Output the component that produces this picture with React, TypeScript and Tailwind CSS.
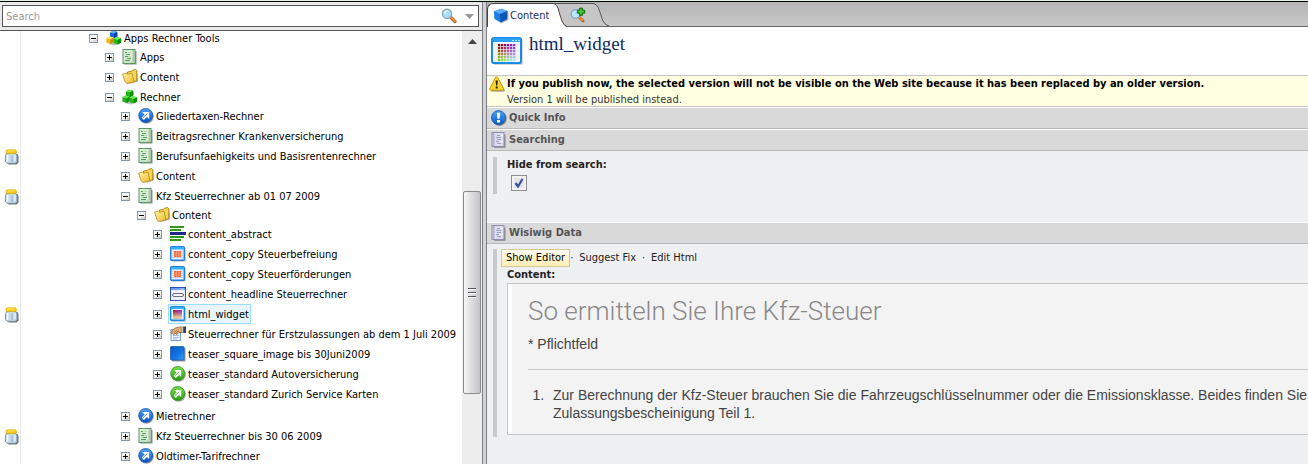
import { useId, type ReactNode } from "react";

type IconKind =
  | "cubes"
  | "greenCubes"
  | "page"
  | "folder"
  | "blueArrow"
  | "greenArrow"
  | "abstract"
  | "copy"
  | "headline"
  | "widget"
  | "hand"
  | "square";

interface TreeNode {
  label: string;
  icon: IconKind;
  locked?: boolean;
  selected?: boolean;
  children?: TreeNode[];
}

const tree: TreeNode[] = [
  {
    label: "Apps Rechner Tools",
    icon: "cubes",
    children: [
      { label: "Apps", icon: "page" },
      { label: "Content", icon: "folder" },
      {
        label: "Rechner",
        icon: "greenCubes",
        children: [
          { label: "Gliedertaxen-Rechner", icon: "blueArrow" },
          { label: "Beitragsrechner Krankenversicherung", icon: "page" },
          { label: "Berufsunfaehigkeits und Basisrentenrechner", icon: "page", locked: true },
          { label: "Content", icon: "folder" },
          {
            label: "Kfz Steuerrechner ab 01 07 2009",
            icon: "page",
            locked: true,
            children: [
              {
                label: "Content",
                icon: "folder",
                children: [
                  { label: "content_abstract", icon: "abstract" },
                  { label: "content_copy Steuerbefreiung", icon: "copy" },
                  { label: "content_copy Steuerförderungen", icon: "copy" },
                  { label: "content_headline Steuerrechner", icon: "headline" },
                  { label: "html_widget", icon: "widget", locked: true, selected: true },
                  { label: "Steuerrechner für Erstzulassungen ab dem 1 Juli 2009", icon: "hand" },
                  { label: "teaser_square_image bis 30Juni2009", icon: "square" },
                  { label: "teaser_standard Autoversicherung", icon: "greenArrow" },
                  { label: "teaser_standard Zurich Service Karten", icon: "greenArrow" },
                ],
              },
            ],
          },
          { label: "Mietrechner", icon: "blueArrow" },
          { label: "Kfz Steuerrechner bis 30 06 2009", icon: "page", locked: true },
          { label: "Oldtimer-Tarifrechner", icon: "blueArrow" },
        ],
      },
    ],
  },
];

const indents = ["pl-[68px]", "pl-[84px]", "pl-[100px]", "pl-[116px]", "pl-[132px]"];

function Svg({ children, size = "size-4" }: { children: ReactNode; size?: string }) {
  return (
    <svg viewBox="0 0 16 16" className={`${size} shrink-0`} aria-hidden="true">
      {children}
    </svg>
  );
}

function Cube({ x, y, top, left, right }: { x: number; y: number; top: string; left: string; right: string }) {
  return (
    <g transform={`translate(${x} ${y})`}>
      <path d="M0.4 2.2 3.4 0.5 7.6 1.6 7.8 6 4.4 8 .4 6.6Z" fill={left} />
      <path d="M0.4 2.2 3.4 0.5 7.6 1.6 4.4 3.4Z" fill={top} />
      <path d="M4.4 3.4 7.6 1.6 7.8 6 4.4 8Z" fill={right} />
    </g>
  );
}

function NodeIcon({ kind }: { kind: IconKind }) {
  const id = useId();
  switch (kind) {
    case "cubes":
    case "greenCubes": {
      const green = kind === "greenCubes";
      return (
        <Svg>
          <path d="M2 14 9 15.4 15.6 12.6V8L9 12Z" fill="#000" opacity=".25" />
          {green ? (
            <Cube x={3.6} y={0.2} top="#5fe84a" left="#1fb414" right="#0d8a08" />
          ) : (
            <Cube x={3.6} y={0.2} top="#6db4ff" left="#1c62e0" right="#0a3fae" />
          )}
          {green ? (
            <Cube x={0} y={6} top="#5fe84a" left="#1fb414" right="#0d8a08" />
          ) : (
            <Cube x={0} y={6} top="#ffe97a" left="#f2b610" right="#c58a08" />
          )}
          <Cube x={7.3} y={6.6} top="#6cf055" left="#24bb18" right="#0d8a08" />
        </Svg>
      );
    }
    case "page":
      return (
        <Svg>
          <path d="M2 2H14.500V15.500H2Z" fill="#6b786d" opacity=".8" />
          <rect x="1" y=".5" width="12" height="14" fill="#dcedda" stroke="#5c9462" />
          <path d="M10.500 1H12.500V14H10.500Z" fill="#a9cba8" />
          <path d="M3 3.500H5M4 5.500H8M3 7.500H6M5 9.500H9M3 11.500H8" stroke="#559a59" />
          <path d="M6 3.500H9M6 7.500H9M3 9.500H5M2 13H12" stroke="#b4d6b2" />
        </Svg>
      );
    case "folder":
      return (
        <Svg>
          <defs>
            <linearGradient id={id} x1="0" y1="0" x2="1" y2="1">
              <stop offset="0" stopColor="#fff6a8" />
              <stop offset="1" stopColor="#efb92c" />
            </linearGradient>
          </defs>
          <path d="M5 15 15.800 12.500V3.500L13 14Z" fill="#555" opacity=".5" />
          <path d="M5.500 3 9.500 2.400 10.500 1.200 13.800.6 14.800 1.800V11.800L6 13.800Z" fill="#f6d650" stroke="#a67c12" strokeWidth=".9" />
          <path d="M.6 5.200 4.200 4 5.800 5.200 10 4.200 12 12.800 4.800 14.500 3 12.500Z" fill={`url(#${id})`} stroke="#b5881a" strokeWidth=".8" />
        </Svg>
      );
    case "blueArrow":
    case "greenArrow": {
      const blue = kind === "blueArrow";
      return (
        <Svg>
          <defs>
            <linearGradient id={id} x1="0" y1="0" x2="0" y2="1">
              <stop offset="0" stopColor={blue ? "#4ea2f4" : "#7be04a"} />
              <stop offset="1" stopColor={blue ? "#0a52bd" : "#279a12"} />
            </linearGradient>
          </defs>
          <circle cx="8.600" cy="8.600" r="7.200" fill="#222" opacity=".4" />
          <circle cx="7.700" cy="7.500" r="7" fill={`url(#${id})`} stroke={blue ? "#1656b0" : "#2c9418"} strokeWidth=".8" />
          <path d="M4.200 4H11.200V11L9 8.900 5.800 12 3.600 9.800 6.600 6.500Z" fill="#fff" />
          <path d="M4.800 9.900 9.300 5.600" stroke={blue ? "#1560c8" : "#3cab22"} strokeWidth=".8" />
        </Svg>
      );
    }
    case "abstract":
      return (
        <Svg>
          <path d="M0 0H14V2H0ZM0 3H11V5H0ZM0 10H14V12H0ZM0 13H11V15H0Z" fill="#2c9a14" />
          <path d="M0 6H16V9H0Z" fill="#24248c" />
        </Svg>
      );
    case "copy":
      return (
        <Svg>
          <path d="M2 2H15.500V15.500H2Z" fill="#555" opacity=".5" />
          <rect x=".7" y=".7" width="13.600" height="13.600" rx="1" fill="#e9ecfa" stroke="#1b7fe0" strokeWidth="1.400" />
          <path d="M1 1H14V3.500H1Z" fill="#37b0f8" />
          <path d="M2.500 5.500H13M2.500 7.500H13M2.500 9.500H13M2.500 11.500H13" stroke="#aab0d8" strokeDasharray="1 1" />
          <rect x="4" y="5" width="7" height="6" fill="#f06a3c" />
          <path d="M6.500 5V11M8.800 5V11M4 7H11M4 9H11" stroke="#ffb08c" strokeWidth=".5" />
        </Svg>
      );
    case "headline":
      return (
        <Svg>
          <rect x=".5" y="1.500" width="15" height="13" fill="#eef1fb" stroke="#2f50b4" />
          <path d="M1 2H15V4H1Z" fill="#6c9df0" />
          <path d="M10.500 3H14" stroke="#fff" strokeDasharray="1 1" />
          <rect x="2.500" y="7.500" width="11" height="3" rx="1.500" fill="#f4f4f4" stroke="#6d6d75" />
        </Svg>
      );
    case "widget":
      return (
        <Svg>
          <defs>
            <linearGradient id={id} x1="0" y1="0" x2="1" y2="0">
              <stop offset="0" stopColor="#8e1030" />
              <stop offset="1" stopColor="#9a28e8" />
            </linearGradient>
            <linearGradient id={`${id}b`} x1="0" y1="0" x2="0" y2="1">
              <stop offset="0" stopColor="#e8d870" stopOpacity="0" />
              <stop offset="1" stopColor="#f0e89a" />
            </linearGradient>
          </defs>
          <path d="M2 2H15.500V15.500H2Z" fill="#555" opacity=".5" />
          <rect x=".7" y=".7" width="13.600" height="13.600" rx="1" fill="#eef6ff" stroke="#1b86e4" strokeWidth="1.400" />
          <path d="M1 1H14V3H1Z" fill="#37b0f8" />
          <rect x="3" y="4" width="9" height="8.500" fill={`url(#${id})`} />
          <rect x="3" y="4" width="9" height="8.500" fill={`url(#${id}b)`} />
        </Svg>
      );
    case "hand":
      return (
        <Svg>
          <rect x="1" y="3.500" width="9.500" height="11" fill="#eef4fd" stroke="#7b9bd0" />
          <path d="M3 9.500H9M3 11.500H9M3 13H7" stroke="#a5c0e8" />
          <path d="M1 6 4.500 2.200 10.500 .8 12.500 2.500 12 6.500 9 6.500 7 8.500 5.500 7.500 3.500 8.800 2.800 7.300 1.200 7.500Z" fill="#dfae78" stroke="#8a5a30" strokeWidth=".7" />
          <path d="M4 6.500 7.500 4M6 7 9 5" stroke="#8a5a30" strokeWidth=".6" />
          <path d="M11.500.8H13.200V6.500H11.500Z" fill="#ddd" stroke="#777" strokeWidth=".5" />
          <path d="M13.200.5H16V7H13.200Z" fill="#3d434e" />
        </Svg>
      );
    case "square":
      return (
        <Svg>
          <defs>
            <linearGradient id={id} x1="0" y1="0" x2="1" y2="1">
              <stop offset="0" stopColor="#0c55c4" />
              <stop offset=".6" stopColor="#1377e6" />
              <stop offset="1" stopColor="#3aa4fb" />
            </linearGradient>
          </defs>
          <path d="M2 2H15.500V15.500H2Z" fill="#444" opacity=".55" />
          <rect x=".5" y=".5" width="13.500" height="13.500" rx=".8" fill={`url(#${id})`} stroke="#1a5bb4" strokeWidth=".8" />
        </Svg>
      );
  }
}

function Jar() {
  return (
    <Svg>
      <path d="M3 5H13.500L14.500 7V13.500L12.500 15.600H4.500Z" fill="#333" opacity=".7" />
      <path d="M3 4H11.500L13 6.500V12.500L11.500 14.300H3L1.500 12.500V6.500Z" fill="#c6dbe9" stroke="#768a98" strokeWidth=".9" />
      <path d="M3.500 6V12.500" stroke="#fff" strokeWidth="1.500" />
      <path d="M8 6.500V13" stroke="#a4bfd1" strokeWidth="1.500" />
      <path d="M11 6V12" stroke="#eef6fb" />
      <rect x="2" y=".8" width="10.500" height="3.800" rx="1.600" fill="#f8c912" stroke="#dba800" strokeWidth=".6" />
      <path d="M3.500 2H10.500" stroke="#ffe860" />
    </Svg>
  );
}

function Expander({ open, label }: { open: boolean; label: string }) {
  return (
    <button type="button" aria-expanded={open} aria-label={label} className="size-[9px] shrink-0">
      <svg viewBox="0 0 9 9" className="size-[9px]" aria-hidden="true">
        <rect x=".5" y=".5" width="8" height="8" fill="#f6f6f4" stroke="#8299b4" />
        <path d="M1 8H8V5Z" fill="#d9d6ce" />
        <path d={open ? "M2 4.500H7" : "M2 4.500H7M4.500 2V7"} stroke="#000" />
      </svg>
    </button>
  );
}

function TreeItem({ node, depth }: { node: TreeNode; depth: number }) {
  return (
    <li>
      <div className="flex h-5 items-center">
        <span className="flex w-[21px] shrink-0 items-center pt-0.5 pl-1">{node.locked && <Jar />}</span>
        <div className={`flex items-center gap-1.5 ${indents[depth]}`}>
          <Expander open={!!node.children} label={node.label} />
          <a
            href="#"
            className={`flex h-5 items-center gap-0.5 border pr-px pl-px whitespace-nowrap ${
              node.selected ? "border-[#99defd] bg-[#e8f5fd]" : "border-transparent"
            }`}
          >
            <NodeIcon kind={node.icon} />
            <span className="pt-px">{node.label}</span>
          </a>
        </div>
      </div>
      {node.children && (
        <ul className="-mt-px pb-px">
          {node.children.map((child) => (
            <TreeItem key={child.label} node={child} depth={depth + 1} />
          ))}
        </ul>
      )}
    </li>
  );
}

function MagnifierIcon() {
  return (
    <Svg>
      <path d="M9.500 9 14 13.500" stroke="#9a6a40" strokeWidth="3.200" strokeLinecap="round" />
      <path d="M9.800 9 13.800 13" stroke="#f58a2c" strokeWidth="2.200" strokeLinecap="round" />
      <circle cx="6" cy="5.800" r="4.600" fill="#a8e0fa" stroke="#8fa3b4" strokeWidth="1.400" />
      <path d="M3.500 5.500A3 3 0 0 1 6.500 3" stroke="#fff" strokeWidth="1.200" fill="none" />
    </Svg>
  );
}

function AddMagnifierIcon() {
  return (
    <Svg>
      <path d="M9 10 13 14" stroke="#9a5a30" strokeWidth="2.800" strokeLinecap="round" />
      <path d="M9 9.800 12.600 13.400" stroke="#f58a2c" strokeWidth="1.900" strokeLinecap="round" />
      <circle cx="5.500" cy="7" r="4.300" fill="#b8e6fb" stroke="#7fa6c8" strokeWidth="1.300" />
      <path d="M9.500 1H12.500V3.200H14.700V6.200H12.500V8.400H9.500V6.200H7.300V3.200H9.500Z" fill="#14a014" stroke="#0b650b" strokeWidth=".8" />
      <path d="M11 2V7.400M8.300 4.700H13.700" stroke="#5fdc4a" />
    </Svg>
  );
}

function BlueCubeIcon() {
  return (
    <Svg>
      <path d="M8 15.500 15.500 12V5L8 9Z" fill="#333" opacity=".4" />
      <path d="M.8 3.200 8.500.8 14.500 3 14 11 7.500 14.500 1.500 11Z" fill="#1c7ce4" />
      <path d="M.8 3.200 8.500.8 14.500 3 7 6Z" fill="#5aaaf8" />
      <path d="M7 6 14.500 3 14 11 7.500 14.500Z" fill="#0e55b8" />
    </Svg>
  );
}

function PaletteIcon() {
  const rows = [
    ["#7c0a14", "#8c0a3c", "#8c0a5a", "#8c148c", "#8c1eb4", "#8c28e0"],
    ["#96280a", "#a0283c", "#a03264", "#a03c8c", "#963cbe", "#9646e6"],
    ["#9c5a0a", "#aa5a3c", "#b45a6e", "#aa5f96", "#a564c8", "#a06ef0"],
    ["#a08c0a", "#aa8c3c", "#b48c6e", "#aa8ca0", "#a08cc8", "#a596f0"],
    ["#82b40a", "#96be3c", "#a0be6e", "#a0bea0", "#a5bec8", "#aabef0"],
    ["#64dc0a", "#82e63c", "#96e66e", "#96e6a0", "#a0e6c8", "#aae6f0"],
  ];
  return (
    <svg viewBox="0 0 32 28" className="h-7 w-8 shrink-0" aria-hidden="true">
      <path d="M3 3H31.500V27.500H3Z" fill="#666" opacity=".5" />
      <rect x="1" y="1" width="29" height="25" rx="2" fill="#fff" stroke="#1a8ae8" strokeWidth="2" />
      <path d="M2 1H29V5H2Z" fill="#2ba0f6" />
      <path d="M21 3.500H29" stroke="#b8e2ff" strokeDasharray="2 1" />
      <rect x="3" y="6" width="25" height="18" fill="#f0f0f8" />
      {rows.map((row, r) =>
        row.map((fill, c) => (
          <rect key={`${r}-${c}`} x={7 + c * 3} y={7 + r * 3} width="2.300" height="2.300" fill={fill} />
        )),
      )}
    </svg>
  );
}

function WarningIcon() {
  return (
    <Svg>
      <path d="M9 2 16 14.500 15 15.800H2Z" fill="#555" opacity=".5" />
      <path d="M7.500.8Q8.400.8 9 2L14.500 12.500Q15 14.200 13.500 14.300H1.500Q.2 14.200.8 12.500L6.200 2Q6.700.8 7.500.8Z" fill="#fbd62e" stroke="#c09010" strokeWidth=".9" />
      <path d="M6.600 4.500H8.800L8.300 9.500H7.100ZM6.700 10.600H8.700V12.500H6.700Z" fill="#222" />
    </Svg>
  );
}

function InfoIcon() {
  const id = useId();
  return (
    <Svg>
      <defs>
        <linearGradient id={id} x1="0" y1="0" x2="0" y2="1">
          <stop offset="0" stopColor="#4ba4f6" />
          <stop offset="1" stopColor="#0b5bc6" />
        </linearGradient>
      </defs>
      <circle cx="8.500" cy="8.700" r="7.200" fill="#222" opacity=".45" />
      <circle cx="7.500" cy="7.600" r="7" fill={`url(#${id})`} stroke="#1557b0" strokeWidth=".8" />
      <path d="M6 2.800H9L8.600 8.800H6.400ZM6 10H9V12.500H6Z" fill="#fff" />
    </Svg>
  );
}

function FormIcon() {
  return (
    <Svg>
      <path d="M3 2.500H14.500V15.800H3Z" fill="#555" opacity=".6" />
      <rect x="1" y=".5" width="12" height="14" fill="#dedeee" stroke="#8c8cae" />
      <path d="M1.500 1H3.500V14H1.500Z" fill="#b0b0d2" />
      <path d="M6 3.500H9M5 5.500H10M6 7.500H10M5 9.500H8M6 11.500H10" stroke="#9c9cc0" />
      <path d="M10 3.500H12M9 9.500H12" stroke="#fff" />
    </Svg>
  );
}

function SectionHeader({ icon, title }: { icon: ReactNode; title: string }) {
  return (
    <h2 className="flex h-[22px] items-center gap-0.5 border-t border-b border-t-white border-b-[#b9b9b9] bg-[#d9d9d9] pl-1 text-[11px] leading-4 font-bold text-[#555]">
      {icon}
      {title}
    </h2>
  );
}

export default function App() {
  return (
    <div className="flex h-screen flex-col overflow-hidden border-t border-[#dff0e4] bg-[#eff0f2] font-['DejaVu_Sans_Condensed','DejaVu_Sans',sans-serif] text-[11px] leading-4 text-[#000]">
      <div className="flex min-h-0 grow border-t border-black">
        <aside className="flex w-[482px] shrink-0 flex-col bg-white">
          <div className="border-b border-[#555] bg-[#e9ebea] px-0.5 pt-[3px] pb-[3px]">
            <form role="search" className="mr-px flex h-[22px] items-center border border-[#555] bg-white pr-1">
              <input
                type="text"
                aria-label="Search"
                placeholder="Search"
                className="h-full min-w-0 grow px-[3px] outline-none placeholder:text-[#999]"
              />
              <button type="button" aria-label="Start search" className="mr-2">
                <MagnifierIcon />
              </button>
              <button type="button" aria-label="Search options">
                <svg viewBox="0 0 9 5" className="h-[5px] w-[9px]" aria-hidden="true">
                  <path d="M0 0H9L4.500 5Z" fill="#999" />
                </svg>
              </button>
            </form>
          </div>
          <div className="flex min-h-0 grow">
            <nav
              aria-label="Content tree"
              className="flex min-w-0 grow overflow-hidden bg-[linear-gradient(#e6e6e6,#e6e6e6)] bg-[size:1px_100%] bg-[position:20px_0] bg-no-repeat"
            >
              <ul className="-mt-[3px] grow">
                {tree.map((node) => (
                  <TreeItem key={node.label} node={node} depth={0} />
                ))}
              </ul>
            </nav>
            <div className="flex w-5 shrink-0 flex-col bg-[#ededed] px-px">
              <button type="button" aria-label="Scroll up" className="flex h-5 shrink-0 items-center justify-center">
                <svg viewBox="0 0 9 5" className="h-[5px] w-[9px]" aria-hidden="true">
                  <path d="M0 5H9L4.500 0Z" fill="#444" />
                </svg>
              </button>
              <div className="grow-[141] basis-0" />
              <div className="flex grow-[202] basis-0 flex-col items-center justify-center gap-0.5 rounded-xs border border-[#8c8c8c] bg-linear-to-r from-[#f6f6f6] via-[#dcdcde] to-[#c4c4c8]">
                <span className="h-0.5 w-2 border-b border-white bg-[#555]" />
                <span className="h-0.5 w-2 border-b border-white bg-[#555]" />
                <span className="h-0.5 w-2 border-b border-white bg-[#555]" />
              </div>
              <div className="grow-[70] basis-0" />
            </div>
          </div>
        </aside>
        <div className="w-[5px] shrink-0 border-x border-[#7d7f83] bg-[#d0d3d8]" />
        <main className="flex min-w-0 grow flex-col">
          <div role="tablist" className="flex h-[25px] shrink-0 border-b border-[#666] bg-linear-to-b from-[#b4b4b4] to-[#cacaca] pt-px">
            <button type="button" role="tab" aria-selected="true" className="-mb-px flex">
              <span className="flex h-6 items-center rounded-tl-md border-t border-l border-[#444] bg-white pl-[5px] text-[#15325f]">
                <BlueCubeIcon />
                <span className="pl-px">Content</span>
              </span>
              <svg viewBox="0 0 18 24" className="h-6 w-[18px]" aria-hidden="true">
                <path d="M2 0H18V23H2Z" fill="#c6c6c6" />
                <path d="M2 .5H18M14 23.500H18" stroke="#555" />
                <path d="M0 0H4C10 1 9 8 13 18Q15 23 18 24H0Z" fill="#fff" />
                <path d="M0 .5H4C10 1.500 9 8 13 18Q15 23 18 23.500" fill="none" stroke="#444" />
              </svg>
            </button>
            <button type="button" role="tab" aria-selected="false" aria-label="Search" className="flex">
              <span className="flex h-[23px] items-center border-t border-[#555] bg-[#c6c6c6] pr-[5px] pl-[3px]">
                <AddMagnifierIcon />
              </span>
              <svg viewBox="0 0 18 23" className="h-[23px] w-[18px]" aria-hidden="true">
                <path d="M0 0H2C8 1 8 8 12 18Q14 22 18 23H0Z" fill="#c6c6c6" />
                <path d="M0 .5H2C8 1.500 8 8 12 18Q14 22 18 23" fill="none" stroke="#555" />
              </svg>
            </button>
          </div>
          <header className="flex h-12 shrink-0 items-start gap-1.5 bg-white pt-2.5 pl-1">
            <PaletteIcon />
            <h1 className="-mt-1 font-['Liberation_Serif',serif] text-[19px] leading-[22px] text-[#0f2b5f]">html_widget</h1>
          </header>
          <div role="alert" className="flex h-8 shrink-0 items-start border-t border-b border-[#c4c4c4] bg-[#ffffe1] pl-0.5 whitespace-nowrap">
            <WarningIcon />
            <div className="pl-0.5">
              <p className="font-bold">
                If you publish now, the selected version will not be visible on the Web site because it has been replaced by an older version.
              </p>
              <p className="text-[#333]">Version 1 will be published instead.</p>
            </div>
          </div>
          <SectionHeader icon={<InfoIcon />} title="Quick Info" />
          <section>
            <SectionHeader icon={<FormIcon />} title="Searching" />
            <div className="px-1.5 pt-1.5 pb-7">
              <div className="border-l-4 border-[#c9c9c9] pl-2.5">
                <label htmlFor="hide-search" className="block font-bold text-[#222]">
                  Hide from search:
                </label>
                <span className="ml-1 grid w-4 pt-0.5 pb-[3px]">
                  <input
                    id="hide-search"
                    type="checkbox"
                    defaultChecked
                    className="peer col-start-1 row-start-1 size-4 appearance-none border border-[#8e8f8f] bg-[#e4e6ea] shadow-[inset_0_0_0_2px_#f4f4f4]"
                  />
                  <svg viewBox="0 0 16 16" className="pointer-events-none invisible col-start-1 row-start-1 size-4 peer-checked:visible" aria-hidden="true">
                    <path d="M4.500 8 7 11.500 11.500 4" fill="none" stroke="#3b519c" strokeWidth="2.200" />
                  </svg>
                </span>
              </div>
            </div>
          </section>
          <section>
            <SectionHeader icon={<FormIcon />} title="Wisiwig Data" />
            <div className="pt-[5px] pb-1.5 pl-1.5">
              <div className="border-l-4 border-[#c9c9c9] pb-0.5 pl-1">
                <div className="flex h-[18px] items-center whitespace-nowrap text-[#222]">
                  <button type="button" className="h-[18px] border border-[#d6c795] bg-linear-to-b from-[#fffdf2] to-[#ffeeb5] px-1 leading-4 text-black">
                    Show Editor
                  </button>
                  <span className="w-[9px]">·</span>
                  <button type="button">Suggest Fix</button>
                  <span className="w-[15px] text-center">·</span>
                  <button type="button">Edit Html</button>
                </div>
                <div className="pl-1.5">
                  <h3 className="font-bold text-[#222]">Content:</h3>
                  <div className="border border-r-0 border-[#c6c6c6] bg-white pl-1">
                    <article className="overflow-hidden bg-[#f3f3f3] pt-[11px] pb-3 pl-4 font-['Liberation_Sans',Arial,sans-serif] text-[14px] leading-[18px] text-[#444]">
                      <h4 className="font-['Roboto',sans-serif] text-[26px] leading-8 font-light whitespace-nowrap text-[#888]">So ermitteln Sie Ihre Kfz-Steuer</h4>
                      <p className="pt-2 pb-4">* Pflichtfeld</p>
                      <hr className="border-[#c9c9c9]" />
                      <ol className="list-decimal pt-4 pl-5 whitespace-nowrap">
                        <li className="pl-[5px]">
                          Zur Berechnung der Kfz-Steuer brauchen Sie die Fahrzeugschlüsselnummer oder die Emissionsklasse. Beides finden Sie
                          <br />
                          Zulassungsbescheinigung Teil 1.
                        </li>
                      </ol>
                    </article>
                  </div>
                </div>
              </div>
            </div>
          </section>
        </main>
      </div>
    </div>
  );
}
